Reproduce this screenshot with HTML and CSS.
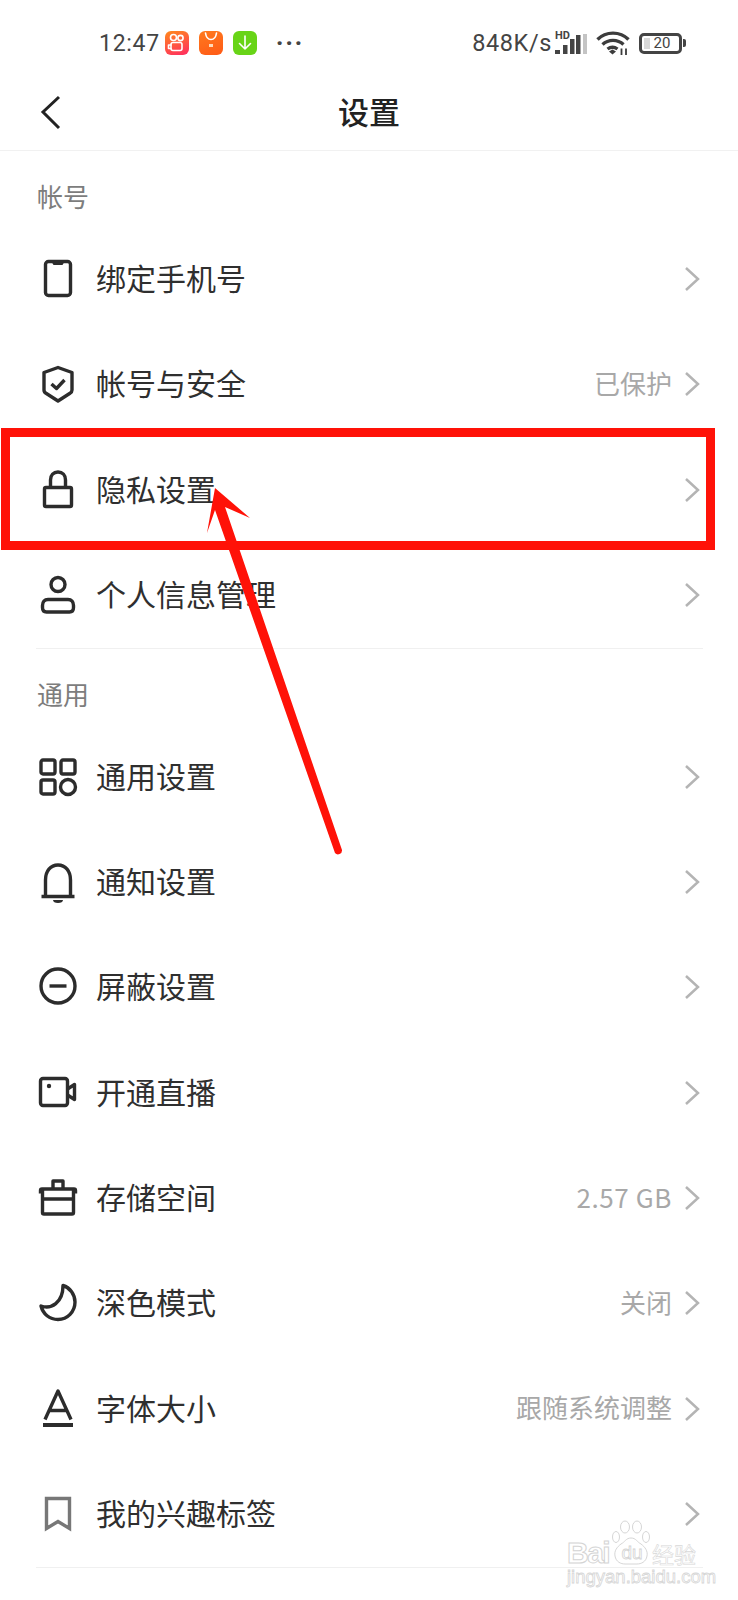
FILE: index.html
```html
<!DOCTYPE html>
<html lang="zh-CN">
<head>
<meta charset="utf-8">
<title>设置</title>
<link rel="stylesheet" href="styles.css">
</head>
<body>
<div class="page">
  <div class="status">
    <div class="status-left">
      <span class="clock">12:47</span>
      <span class="app app-ks"><svg viewBox="0 0 24 24" width="24" height="24"><circle cx="8.500" cy="6.500" r="3" class="app-line"/><circle cx="15.500" cy="7" r="2.600" class="app-line"/><rect x="6" y="11.500" width="11" height="8" rx="2" class="app-line"/><path d="M6 14H3.500v3.500H6" class="app-line"/></svg></span>
      <span class="app app-bag"><svg viewBox="0 0 24 24" width="24" height="24"><path d="M6.500 2c.6 4.500 2.500 6.500 5.500 6.500S16.900 6.500 17.500 2" class="app-line"/><rect x="10" y="13" width="4" height="3" fill="#ffd9b8"/></svg></span>
      <span class="app app-dl"><svg viewBox="0 0 24 24" width="24" height="24"><path d="M12 5v13M6.500 12.500L12 18l5.500-5.500" class="app-line"/></svg></span>
      <span class="dots">···</span>
    </div>
    <div class="status-right">
      <span class="speed">848K/s</span>
      <svg class="signal" viewBox="0 0 32 24" width="32" height="24"><text x="0" y="9" class="hd">HD</text><rect x="0" y="20" width="5" height="4" class="bar"/><rect x="8" y="15" width="4.500" height="9" class="bar"/><rect x="15" y="9" width="4.500" height="15" class="bar"/><rect x="21" y="5" width="4.500" height="19" class="bar"/><rect x="28" y="4" width="4" height="20" class="bar-off"/></svg>
      <svg class="wifi" viewBox="0 0 34 24" width="34" height="24"><path d="M1.500 8.500C10 0 24 0 32.500 8.500M6.500 13.500c6-5.500 15-5.500 21 0M11.500 18c3-2.200 7-2.200 10 0" class="wifi-line"/><path d="M13 20.500l3.500-2 3.500 2-3.500 3z" class="wifi-dot"/><path d="M25.500 17.500v6.500M30 17.500v6.500" class="wifi-arrows"/></svg>
      <span class="battery"><span class="battery-body"><span class="battery-fill"></span><span class="battery-num">20</span></span><span class="battery-cap"></span></span>
    </div>
  </div>

  <header class="nav">
    <svg class="back" viewBox="0 0 24 36" width="24" height="36"><path d="M20 2L4 17l16 16"/></svg>
    <h1 class="title">设置</h1>
    <span class="nav-end"></span>
  </header>

  <section class="group">
    <h2 class="group-label">帐号</h2>
    <div class="row">
      <svg class="ico" viewBox="0 0 40 40"><rect x="7.500" y="2.500" width="25" height="34" rx="3"/><path d="M14 3.500h12l-1.500 2.500h-9z" class="solid"/></svg>
      <span class="row-text">绑定手机号</span>
      <svg class="chev" viewBox="0 0 16 26"><path d="M2 2l12 11L2 24"/></svg>
    </div>
    <div class="row">
      <svg class="ico" viewBox="0 0 40 40"><path d="M20 3.500l14 5v17.500c0 1.500-.5 2.500-2 3.300L20 37 8 29.300c-1.500-.8-2-1.800-2-3.300V8.500z"/><path d="M13.500 20l5 4.500 8-8.500"/></svg>
      <span class="row-text">帐号与安全</span>
      <span class="row-value">已保护</span>
      <svg class="chev" viewBox="0 0 16 26"><path d="M2 2l12 11L2 24"/></svg>
    </div>
    <div class="row">
      <svg class="ico" viewBox="0 0 40 40"><rect x="6.500" y="17.500" width="27" height="19" rx="1.500"/><path d="M12.500 17v-7c0-5 3-8 7.500-8s7.500 3 7.500 8v7"/></svg>
      <span class="row-text">隐私设置</span>
      <svg class="chev" viewBox="0 0 16 26"><path d="M2 2l12 11L2 24"/></svg>
    </div>
    <div class="row">
      <svg class="ico" viewBox="0 0 40 40"><circle cx="20" cy="9.500" r="7"/><path d="M10 24.500h20c3.500 0 5.500 2.500 5.500 6v2c0 3-1.500 4.500-4 4.500H8.500c-2.500 0-4-1.500-4-4.500v-2c0-3.500 2-6 5.500-6z"/></svg>
      <span class="row-text">个人信息管理</span>
      <svg class="chev" viewBox="0 0 16 26"><path d="M2 2l12 11L2 24"/></svg>
    </div>
  </section>

  <section class="group">
    <h2 class="group-label">通用</h2>
    <div class="row">
      <svg class="ico" viewBox="0 0 40 40"><rect x="3" y="3" width="14" height="14" rx="2"/><rect x="23" y="3" width="14" height="14" rx="2"/><rect x="3" y="23" width="14" height="14" rx="2"/><circle cx="30" cy="30" r="7.500"/></svg>
      <span class="row-text">通用设置</span>
      <svg class="chev" viewBox="0 0 16 26"><path d="M2 2l12 11L2 24"/></svg>
    </div>
    <div class="row">
      <svg class="ico ico-tall" viewBox="0 -4 40 46"><path d="M7.500 33V17c0-9 5-15 12.500-15s12.500 6 12.500 15v16"/><path d="M3.500 33.500h33"/><path d="M15 37h10c0 2-2 3-5 3s-5-1-5-3z" class="solid"/></svg>
      <span class="row-text">通知设置</span>
      <svg class="chev" viewBox="0 0 16 26"><path d="M2 2l12 11L2 24"/></svg>
    </div>
    <div class="row">
      <svg class="ico" viewBox="0 0 40 40"><circle cx="20" cy="19" r="17"/><path d="M11.500 19h17"/></svg>
      <span class="row-text">屏蔽设置</span>
      <svg class="chev" viewBox="0 0 16 26"><path d="M2 2l12 11L2 24"/></svg>
    </div>
    <div class="row">
      <svg class="ico" viewBox="0 0 40 40"><rect x="2.500" y="5.500" width="27" height="27" rx="2.500"/><path d="M29.500 16l7-4.500v15l-7-4.500"/><circle cx="11" cy="13" r="2.200" class="solid"/></svg>
      <span class="row-text">开通直播</span>
      <svg class="chev" viewBox="0 0 16 26"><path d="M2 2l12 11L2 24"/></svg>
    </div>
    <div class="row">
      <svg class="ico" viewBox="0 0 40 40"><path d="M2.500 15.500v-3c0-1 .5-1.500 1.500-1.500h32c1 0 1.500.5 1.500 1.500v3"/><path d="M15 11V3h10v8"/><path d="M4.500 12v22.500c0 1 .5 1.500 1.500 1.500h28c1 0 1.500-.5 1.500-1.500V12M4.500 21h31"/></svg>
      <span class="row-text">存储空间</span>
      <span class="row-value row-value-num">2.57 GB</span>
      <svg class="chev" viewBox="0 0 16 26"><path d="M2 2l12 11L2 24"/></svg>
    </div>
    <div class="row">
      <svg class="ico" viewBox="0 0 40 40"><path d="M25 2.500c7 2 12 9 12 16.500 0 9.500-7.500 17.500-17 17.500-8.500 0-15-5.500-17-13.500 10 3.500 22-3 22-20.500z"/></svg>
      <span class="row-text">深色模式</span>
      <span class="row-value">关闭</span>
      <svg class="chev" viewBox="0 0 16 26"><path d="M2 2l12 11L2 24"/></svg>
    </div>
    <div class="row">
      <svg class="ico" viewBox="0 0 40 40"><path d="M7 30.500L20 2l13 28.500M12 21.500h16"/><path d="M5 36h30" class="thick"/></svg>
      <span class="row-text">字体大小</span>
      <span class="row-value">跟随系统调整</span>
      <svg class="chev" viewBox="0 0 16 26"><path d="M2 2l12 11L2 24"/></svg>
    </div>
    <div class="row">
      <svg class="ico ico-mark" viewBox="0 0 40 40"><path d="M8.500 4.500h23v30L20 27.500 8.500 34.500z"/></svg>
      <span class="row-text">我的兴趣标签</span>
      <svg class="chev" viewBox="0 0 16 26"><path d="M2 2l12 11L2 24"/></svg>
    </div>
  </section>

  <div class="mark-box"></div>
  <svg class="mark-arrow" viewBox="0 0 738 1600" width="738" height="1600"><path d="M215 488L250 518 225 507 342 850a4 4 0 0 1-7 3L215 510 207 533z"/></svg>

  <div class="watermark">
    <svg class="paw" viewBox="0 0 40 46" width="40" height="46"><ellipse cx="5" cy="17" rx="3.500" ry="5.500"/><ellipse cx="14" cy="7" rx="4.500" ry="6"/><ellipse cx="26" cy="7" rx="4.500" ry="6"/><ellipse cx="35" cy="17" rx="3.500" ry="5.500"/><path d="M20 18c5 0 6 4 10 6 4 3 7 7 6 12-1 6-6 8-10 8H14c-4 0-9-2-10-8-1-5 2-9 6-12 4-2 5-6 10-6z"/></svg>
    <div class="wm-main"><span class="wm-latin">Bai</span><span class="wm-du">du</span><span class="wm-cn">经验</span></div>
    <div class="wm-sub">jingyan.baidu.com</div>
  </div>
</div>
</body>
</html>
```
FILE: styles.css
```css
* { box-sizing: border-box; }
html, body { margin: 0; padding: 0; background: #fff; }
.page {
  position: relative;
  width: 738px;
  height: 1600px;
  overflow: hidden;
  background: #fff;
  font-family: "Noto Sans CJK SC", "Noto Sans", sans-serif;
  color: #333;
}

/* status bar */
.status {
  height: 86px;
  display: flex;
  justify-content: space-between;
  align-items: center;
  padding: 0 52px 0 99px;
  color: #444;
  font-family: Roboto, "Noto Sans", sans-serif;
}
.status-left, .status-right { display: flex; align-items: center; }
.clock { font-size: 23px; font-weight: 400; margin-right: 5px; letter-spacing: .7px; }
.app { width: 24px; height: 24px; border-radius: 6px; margin-right: 10px; display: block; }
.app svg { display: block; }
.app-ks { background: linear-gradient(160deg, #ff8a1c, #ff2a62); }
.app-bag { background: linear-gradient(160deg, #ff7a1e, #ff5a16); }
.app-dl { background: #68d417; }
.app-line { fill: none; stroke: #fff; stroke-width: 1.600; stroke-linecap: round; stroke-linejoin: round; }
.dots { font-size: 26px; font-weight: 700; line-height: 24px; letter-spacing: 1.500px; margin-left: 9px; }
.speed { font-size: 23.500px; font-weight: 400; letter-spacing: .6px; }
.signal { margin-left: 3px; margin-top: -3px; }
.hd { font-family: Roboto, sans-serif; font-size: 11px; font-weight: 700; fill: #444; }
.bar { fill: #444; }
.bar-off { fill: #c4c4c4; }
.wifi { margin-left: 9px; margin-top: -1px; }
.wifi-line { fill: none; stroke: #3c3c3c; stroke-width: 3.400; }
.wifi-dot { fill: #3c3c3c; }
.wifi-arrows { fill: none; stroke: #3c3c3c; stroke-width: 1.800; }
.battery { display: flex; align-items: center; margin-left: 9px; }
.battery-body {
  position: relative;
  width: 43px;
  height: 21px;
  border: 3px solid #444;
  border-radius: 5px;
  display: flex;
  align-items: center;
  justify-content: center;
  padding-left: 3px;
}
.battery-fill { position: absolute; left: 2px; top: 2px; bottom: 2px; width: 6px; background: #d9d9d9; }
.battery-num { position: relative; font-size: 15px; line-height: 15px; font-weight: 400; }
.battery-cap { width: 3px; height: 8px; margin-left: 1px; background: #444; border-radius: 0 2px 2px 0; }

/* nav */
.nav {
  height: 65px;
  padding-bottom: 14px;
  display: grid;
  grid-template-columns: 1fr auto 1fr;
  align-items: center;
  border-bottom: 1px solid #f1f1f1;
}
.back { display: block; margin: 4px 0 0 39px; }
.back path { fill: none; stroke: #222; stroke-width: 3; }
.title { margin: 0; font-size: 31px; line-height: 44px; font-weight: 500; color: #222; }

/* groups */
.group { margin: 0 35px 0 36px; border-bottom: 1px solid #f0f0f0; }
.group-label {
  margin: 0;
  height: 75.500px;
  padding: 27px 0 0 1px;
  font-size: 26px;
  line-height: 36px;
  font-weight: 400;
  color: #7d7d7d;
}
.row { height: 105.300px; display: flex; align-items: center; }
.ico { width: 40px; height: 40px; margin: 0 18px 0 2px; flex: none; display: block; }
.ico-tall { height: 46px; }
.ico path, .ico rect, .ico circle { fill: none; stroke: #2c2c2c; stroke-width: 3.400; stroke-linejoin: round; }
.ico .solid { fill: #2c2c2c; stroke: none; }
.ico .thick { stroke-width: 4; }
.ico-mark path { stroke: #777; stroke-linejoin: miter; }
.row-text { flex: 1; font-size: 30px; line-height: 44px; padding-bottom: 4px; color: #2f2f2f; }
.row-value { font-size: 26px; line-height: 36px; padding-bottom: 3px; color: #a8a8a8; margin-right: 12px; }
.row-value-num { letter-spacing: .6px; }
.chev { width: 16px; height: 26px; margin-right: 3px; flex: none; display: block; }
.chev path { fill: none; stroke: #b4b4b4; stroke-width: 2.500; }

/* annotations over the screenshot */
.mark-box {
  position: absolute;
  left: 1px;
  top: 428px;
  width: 714px;
  height: 122px;
  border: 9px solid #ff1208;
}
.mark-arrow { position: absolute; left: 0; top: 0; pointer-events: none; }
.mark-arrow path { fill: #ff1208; }

.watermark {
  position: absolute;
  left: 567px;
  top: 1520px;
  width: 134px;
  color: transparent;
  font-family: "Liberation Sans", sans-serif;
}
.paw { position: absolute; left: 44px; top: 0; }
.paw ellipse, .paw path { fill: #fff; stroke: #d6d6d6; stroke-width: 1; }
.wm-main { position: relative; display: flex; align-items: center; height: 28px; margin-top: 19px; white-space: nowrap; }
.wm-latin {
  width: 45px;
  font-size: 30px;
  line-height: 28px;
  font-weight: 700;
  letter-spacing: -1.500px;
  -webkit-text-stroke: 1px #d4d4d4;
}
.wm-du {
  width: 40px;
  text-align: center;
  font-size: 19px;
  line-height: 28px;
  -webkit-text-stroke: .8px #d4d4d4;
}
.wm-cn {
  font-family: "Noto Sans CJK SC", sans-serif;
  font-size: 22px;
  line-height: 28px;
  -webkit-text-stroke: .6px #d8d8d8;
}
.wm-sub {
  font-size: 18.500px;
  line-height: 20px;
  white-space: nowrap;
  -webkit-text-stroke: .8px #d6d6d6;
}
```
